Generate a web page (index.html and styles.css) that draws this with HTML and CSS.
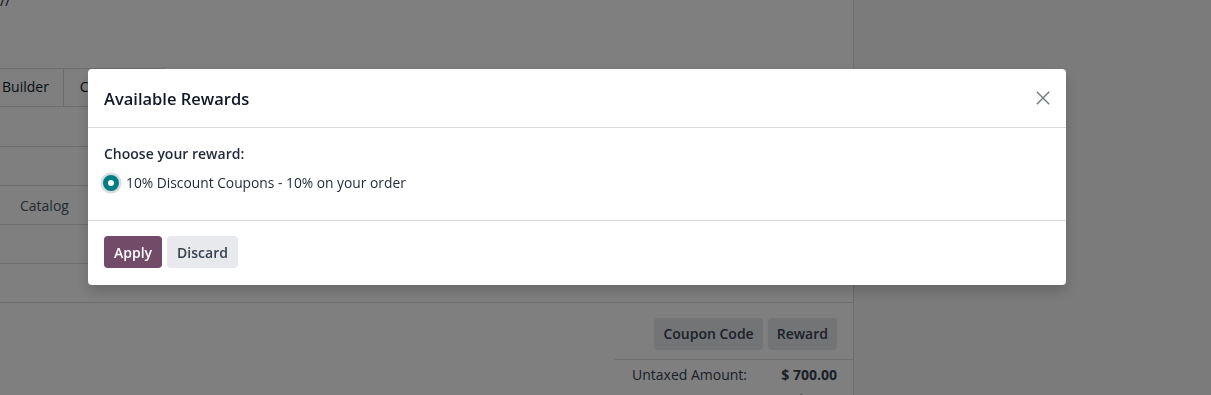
FILE: index.html
```html
<!DOCTYPE html>
<html lang="en">
<head>
<meta charset="utf-8">
<title>Available Rewards</title>
<link rel="stylesheet" href="styles.css">
</head>
<body>
<div class="page">
  <div class="sheet">
    <div class="crumb">//</div>
    <div class="tabs">
      <div class="tab">Builder</div>
      <div class="tab tab-active">Conditions</div>
    </div>
    <div class="row row-first"></div>
    <div class="row"></div>
    <div class="row"><span class="cell">Catalog</span></div>
    <div class="row"></div>
    <div class="row"></div>
    <div class="totals">
      <div class="actions">
        <span class="gbtn">Coupon Code</span>
        <span class="gbtn">Reward</span>
      </div>
      <div class="sum">
        <div class="sum-row"><span class="lbl">Untaxed Amount:</span><span class="val">$ 700.00</span></div>
        <div class="sum-row"><span class="lbl">Taxes:</span><span class="val">$ 0.00</span></div>
      </div>
    </div>
  </div>
  <div class="side"></div>
</div>

<div class="backdrop">
  <div class="modal">
    <div class="modal-header">
      <h4 class="modal-title">Available Rewards</h4>
      <button class="close" aria-label="Close">
        <svg width="14" height="14" viewBox="0 0 14 14"><path d="M0.8 0.8 L13.2 13.2 M13.2 0.8 L0.8 13.2" stroke="#6c757d" stroke-width="1.3" fill="none"/></svg>
      </button>
    </div>
    <div class="modal-body">
      <div class="choose">Choose your reward:</div>
      <label class="option"><span class="radio"></span><span>10% Discount Coupons - 10% on your order</span></label>
    </div>
    <div class="modal-footer">
      <button class="btn btn-primary">Apply</button>
      <button class="btn btn-secondary">Discard</button>
    </div>
  </div>
</div>
</body>
</html>
```

FILE: styles.css
```css
html, body {
  margin: 0;
  padding: 0;
  height: 100%;
  overflow: hidden;
}
body {
  font-family: "Open Sans", "Noto Sans", sans-serif;
  font-size: 14px;
  color: #374151;
  background: #f6f7f7;
}
.page {
  display: flex;
  height: 395px;
}
.sheet {
  width: 853px;
  background: #ffffff;
  border-right: 1px solid #d8dadd;
  flex: none;
  display: flex;
  flex-direction: column;
}
.sheet > * {
  flex: none;
}
.side {
  flex: 1;
  background: #f6f7f7;
}
.crumb {
  height: 68px;
  font-size: 14px;
  line-height: 2px;
  color: #111827;
  box-sizing: border-box;
}
.tabs {
  display: flex;
  height: 38px;
  border-bottom: 1px solid #d8dadd;
}
.tab {
  border-top: 1px solid #d8dadd;
  border-right: 1px solid #d8dadd;
  padding: 0 14px 0 2px;
  line-height: 35px;
  color: #111827;
}
.tab-active {
  padding: 0 16px 0 16px;
  width: 68px;
}
.row {
  height: 38px;
  border-bottom: 1px solid #d8dadd;
  display: flex;
  align-items: center;
}
.row-first {
  height: 39px;
}
.cell {
  padding-left: 20px;
  color: #4b5563;
}
.totals {
  display: flex;
  flex-direction: column;
  align-items: flex-end;
}
.actions {
  display: flex;
  gap: 5px;
  padding: 15px 16px 9px 0;
}
.gbtn {
  background: #e7e9ed;
  border-radius: 4px;
  height: 32px;
  line-height: 32px;
  padding: 0 9px;
  font-weight: 600;
  color: #374151;
}
.sum {
  width: 238px;
  border-top: 1px solid #d8dadd;
  padding: 4px 16px 0 0;
  box-sizing: border-box;
}
.sum-row {
  display: flex;
  justify-content: space-between;
  line-height: 22px;
  padding-left: 17px;
}
.sum-row + .sum-row {
  margin-top: 3px;
}
.lbl {
  color: #374151;
}
.val {
  font-weight: 700;
  color: #374151;
}

/* backdrop & modal */
.backdrop {
  position: fixed;
  inset: 0;
  background: rgba(0, 0, 0, 0.5);
  display: flex;
  align-items: flex-start;
  padding: 69px 0 0 88px;
}
.modal {
  width: 978px;
  background: #ffffff;
  border-radius: 4px;
  box-shadow: 0 6px 14px rgba(0, 0, 0, 0.18);
}
.modal-header {
  display: flex;
  align-items: center;
  justify-content: space-between;
  height: 59px;
  padding: 0 16px;
  border-bottom: 1px solid #d8dadd;
  box-sizing: border-box;
}
.modal-title {
  margin: 0;
  font-size: 16.5px;
  font-weight: 600;
  color: #111827;
}
.close {
  background: none;
  border: 0;
  padding: 0;
  width: 14px;
  height: 14px;
  display: flex;
}
.modal-body {
  padding: 16px 16px 0 16px;
  height: 93px;
  box-sizing: border-box;
  border-bottom: 1px solid #d8dadd;
}
.choose {
  font-weight: 600;
  color: #1f2937;
  line-height: 20px;
}
.option {
  display: flex;
  align-items: center;
  gap: 7px;
  margin-top: 9px;
  margin-left: -1px;
  color: #1f2937;
  font-weight: 500;
  font-size: 13.8px;
}
.radio {
  width: 16px;
  height: 16px;
  box-sizing: border-box;
  border-radius: 50%;
  border: 5px solid #017e84;
  background: #ffffff;
  box-shadow: 0 0 0 2.5px #d9dbde;
}
.modal-footer {
  display: flex;
  gap: 5px;
  padding: 15px 16px 17px 16px;
}
.btn {
  font-family: inherit;
  font-size: 14px;
  font-weight: 600;
  height: 32px;
  padding: 0 10px;
  border: 0;
  border-radius: 4px;
}
.btn-primary {
  background: #714b67;
  color: #ffffff;
}
.btn-secondary {
  background: #e7e9ed;
  color: #374151;
}
```
